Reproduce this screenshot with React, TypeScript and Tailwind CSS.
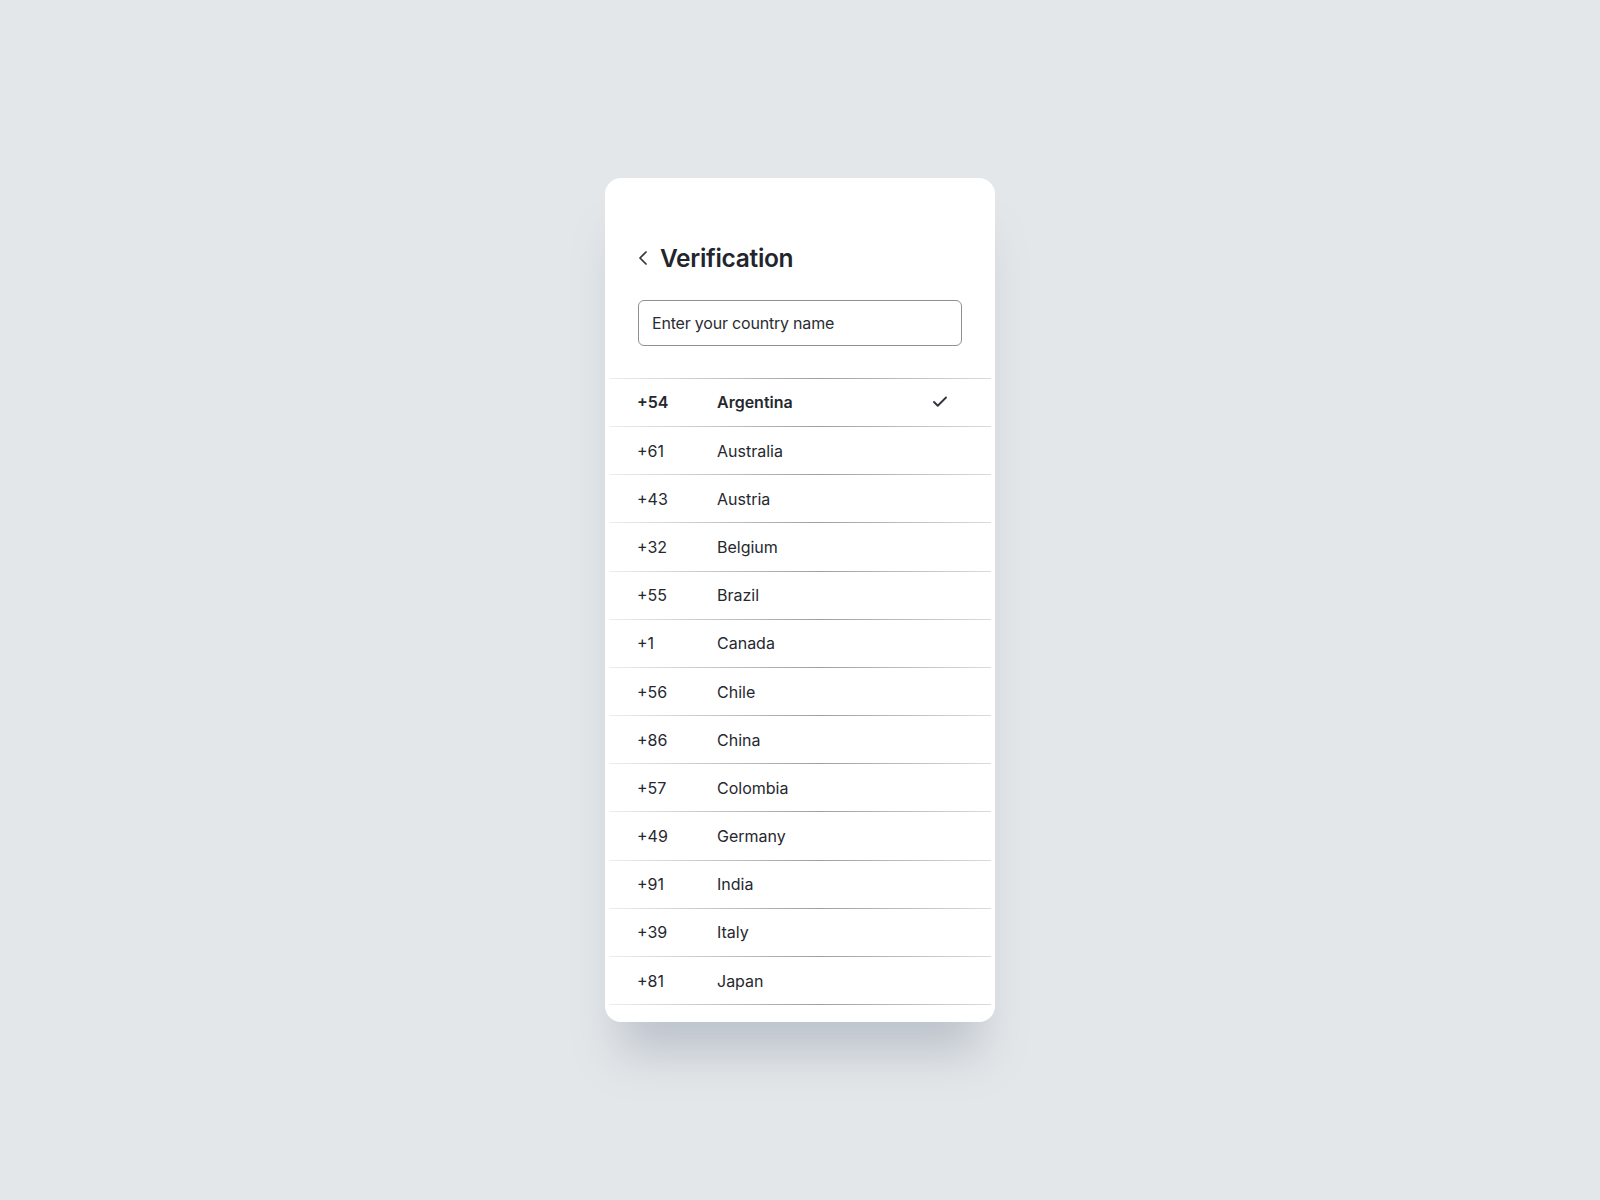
import React from 'react';
import { ChevronLeft, Check } from 'lucide-react';

interface Country {
  code: string;
  name: string;
}

const countries: Country[] = [
  { code: '+54', name: 'Argentina' },
  { code: '+61', name: 'Australia' },
  { code: '+43', name: 'Austria' },
  { code: '+32', name: 'Belgium' },
  { code: '+55', name: 'Brazil' },
  { code: '+1', name: 'Canada' },
  { code: '+56', name: 'Chile' },
  { code: '+86', name: 'China' },
  { code: '+57', name: 'Colombia' },
  { code: '+49', name: 'Germany' },
  { code: '+91', name: 'India' },
  { code: '+39', name: 'Italy' },
  { code: '+81', name: 'Japan' },
];

// faded hairline between rows
const Divider: React.FC = () => (
  <div className="mx-[4px] h-px bg-linear-to-r from-[#eceef0] via-[#9ca0a5] via-55% to-[#d9dcdf]" />
);

const App: React.FC = () => {
  const selected = '+54';

  return (
    <div
      className="min-h-screen w-full flex items-center justify-center bg-[#e3e7ea]"
      style={{ fontFamily: 'Inter, "Noto Sans", sans-serif' }}
    >
      <div className="w-[390px] bg-white rounded-[16px] pt-[64px] pb-[17px] shadow-[0_45px_45px_-15px_rgba(120,130,145,0.35)]">
        {/* header */}
        <div className="px-[33px] flex items-center gap-[5px]">
          <ChevronLeft className="h-6 w-6 -ml-[7px] text-[#33353c]" strokeWidth={1.75} />
          <h1 className="text-[24.5px] leading-8 font-semibold tracking-[-0.3px] text-[#23252d]">
            Verification
          </h1>
        </div>

        {/* search */}
        <div className="px-[33px] mt-[26px]">
          <input
            type="text"
            placeholder="Enter your country name"
            className="w-full h-[46px] rounded-[6px] border border-[#8d9096] px-[13px] text-[16px] text-[#2a2c33] placeholder:text-[#2a2c33] outline-none tracking-[-0.2px]"
          />
        </div>

        {/* list */}
        <div className="mt-[32px]">
          <Divider />
          {countries.map((c) => {
            const isSelected = c.code === selected;
            return (
              <React.Fragment key={c.code}>
                <div className="h-[47.2px] px-[32px] flex items-center text-[16px] text-[#26282f]">
                  <span className={`w-[80px] ${isSelected ? 'font-semibold' : ''}`}>{c.code}</span>
                  <span className={`flex-1 ${isSelected ? 'font-semibold' : ''}`}>{c.name}</span>
                  {isSelected && (
                    <Check className="h-[18px] w-[18px] mr-[14px] text-[#33353c]" strokeWidth={2.5} />
                  )}
                </div>
                <Divider />
              </React.Fragment>
            );
          })}
        </div>
      </div>
    </div>
  );
};

export default App;
